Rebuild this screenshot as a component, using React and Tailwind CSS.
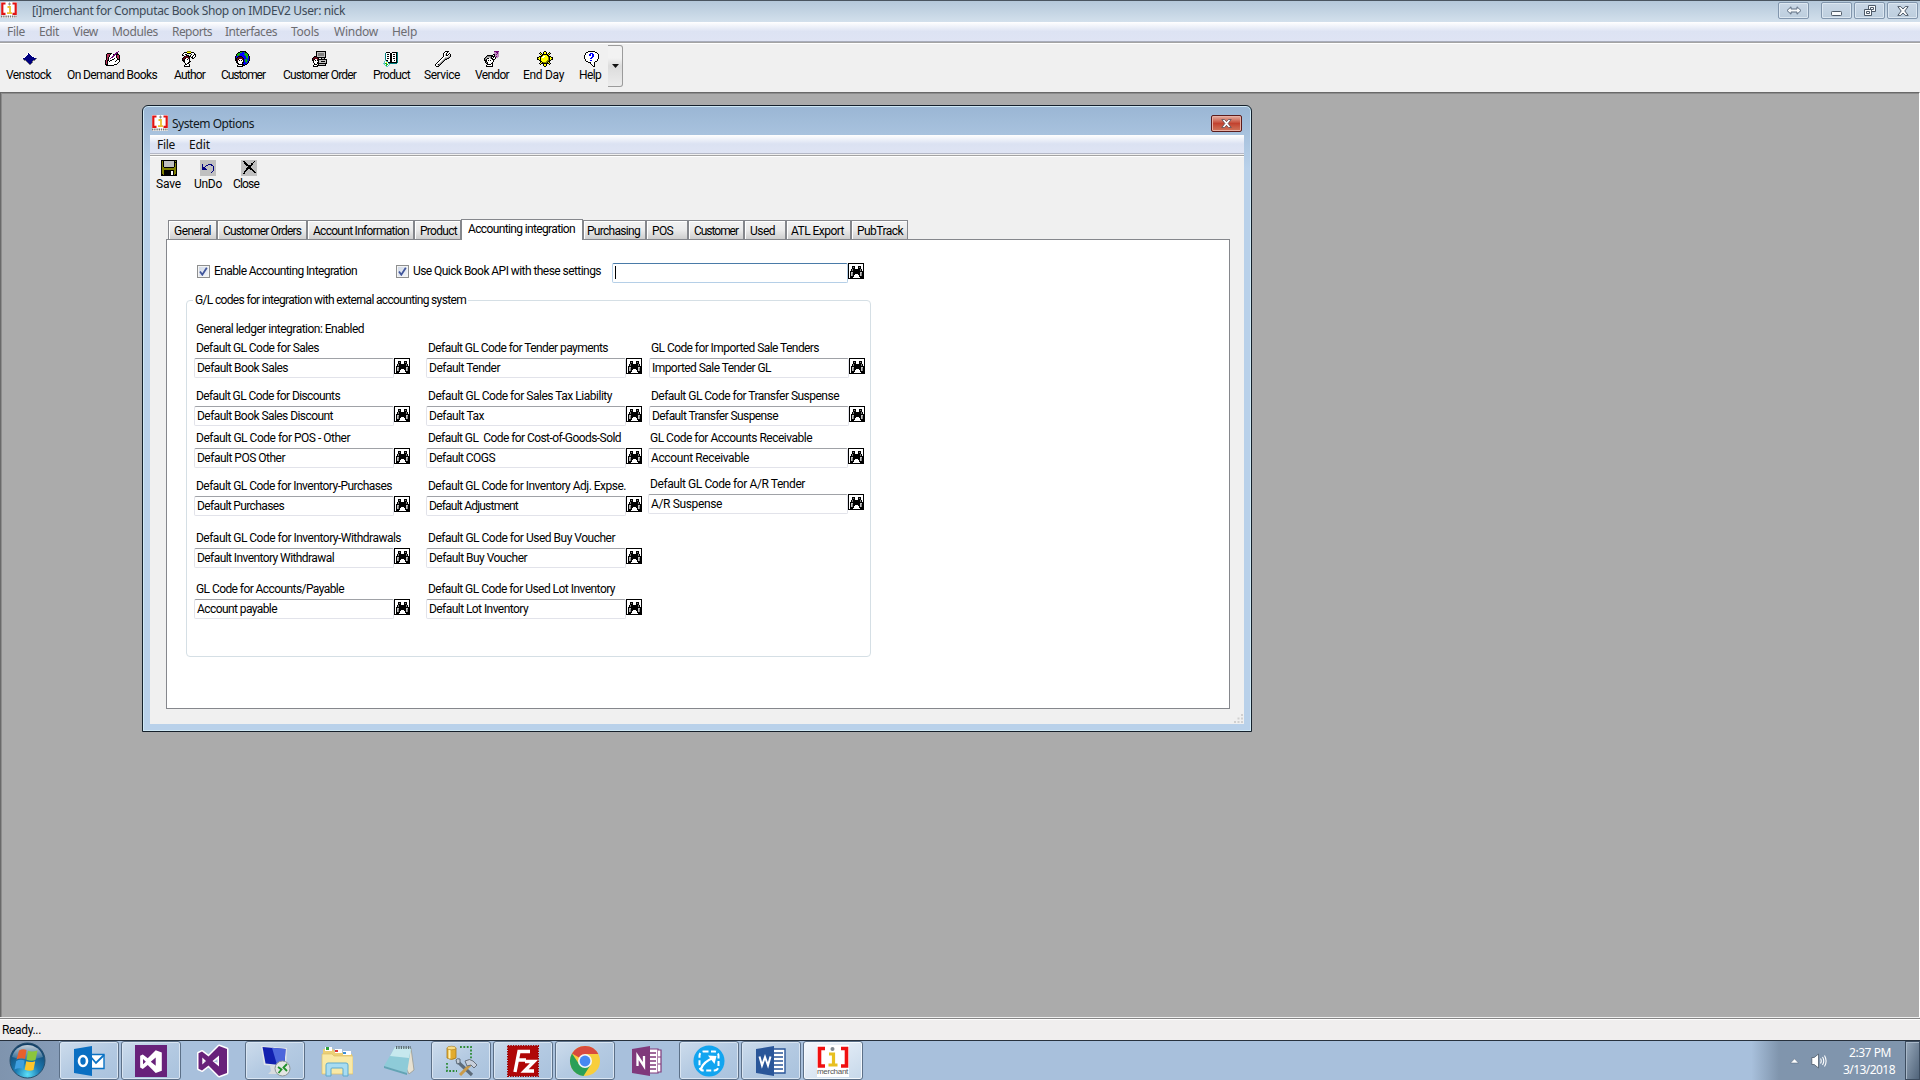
import React, { useLayoutEffect, useRef, useState } from "react";

const UI = "font-['Roboto','Liberation_Sans',sans-serif] text-[12px]";
const SEG = "font-['Noto_Sans','Open_Sans',sans-serif] text-[12px]";

// Text set to an exact width by spreading the letters.
function T({ w, children, className = "" }) {
  const ref = useRef(null);
  const [ls, setLs] = useState(0);
  useLayoutEffect(() => {
    const n = String(children).length;
    const natural = ref.current.getBoundingClientRect().width - ls * n;
    setLs((w - natural) / n);
  }, [w, children]);
  return (
    <span className={"block shrink-0 " + className} style={{ width: w }}>
      <span ref={ref} className="inline-block whitespace-pre" style={{ letterSpacing: ls }}>
        {children}
      </span>
    </span>
  );
}

const COLORS = {
  k: "#000000", w: "#ffffff", g: "#808080", l: "#c0c0c0", n: "#000080", b: "#0000ff",
  y: "#ffff00", o: "#808000", r: "#600818", m: "#b8305a", t: "#008080", c: "#60c8c8",
  p: "#c090c0", u: "#700878", e: "#10b010",
};

// Small bitmap icon: one character for each pixel.
function Pix({ rows, className = "" }) {
  const cells = [];
  rows.forEach((r, y) => {
    for (let x = 0; x < r.length; x++) {
      if (COLORS[r[x]]) cells.push(<rect key={x + "-" + y} x={x} y={y} width="1" height="1" fill={COLORS[r[x]]} />);
    }
  });
  return (
    <svg className={"block h-4 w-4 shrink-0 " + className} viewBox="0 0 16 16" shapeRendering="crispEdges">
      {cells}
    </svg>
  );
}

const BINO = [
  "kkkkkkkkkkkkkkkk",
  "kwwwwwwwwwwwwwwk",
  "kwwwwwwwwwwwwwwk",
  "kwwwkkkwwwkkkwwk",
  "kwwwkgkwwwkgkwwk",
  "kwwwkkkwwwkkkwwk",
  "kwwkgkkkkkkkgkwk",
  "kwwkgkkkkkkkgkwk",
  "kwkkkkkkkkkkkkkk",
  "kwkllkkkkkkkllkk",
  "kwklgkkkkkkklgkk",
  "kwklgkkwwwkklgkk",
  "kwklgkwwwwwklgkk",
  "kwkkkkwwwwwkkkkk",
  "kwkkkwwwwwwwkkkk",
  "kkkkkkkkkkkkkkkk",
];
const VENSTOCK = [
  "................", "......w.........", ".....wnw........", ".....wnnw.......", "....wnnnnw......",
  "...wnnnnnnw.....", ".wwnnnnnnnnnw...", "wnnnnnnnnnnnnng.", ".gnnnnnnnnnnng..", "..ggnnnnnnngg...",
  "....gnnnnng.....", ".....gnnnng.....", "......gnng......", ".......gg.......",
];
const DEMAND = [
  ".............u..", "...........uu...", "..kkkkk...uuk...", ".kmmmkwwkuukkk..", ".kmmkwwwuuwkmmk.",
  ".kmmkwwuuwwkmmk.", ".kmkwwuuwwwkmmk.", ".kmkwuwwwkwwkmk.", ".kmkwwwkkwwwkkk.", "kmkkwkkwwwwkwwk.",
  "kmkwkwwwwwkwwwk.", "kmkwwwwwwwwwwk..", "kmkwwwwwwwwwk...", "kkkwwwwwwkkk....", ".kkkkkkkk.......",
];
const AUTHOR = [
  "......oooo......", "...kkkyyyykkk...", "..kwwwkkkkwwwk..", ".kwwkk....kwwkk.", ".kk..kkk.kwwkwk.",
  "...krrrkkkwkwwk.", "..krrrrrk.kkwk..", ".krrkwwrk..kk...", ".krkwwkwk.......", ".kkkwwwwk.......",
  "..kkwwwwkk......", "...kwwwkk.......", "....kwkk........", "....kkwwk.......", "...kwwwwk.......", "...kkkkkk.......",
];
const CUSTOMER = [
  ".....kkkkkk.....", "...kkeebbekk....", "..keebbbbbeek...", ".keeebbbbeeeek..", ".keebbbbbbeeek..",
  "kbbkkkkbbbbeebk.", "kbkrrrrkbbbeebk.", "kkrrrrrrkbbbebk.", "kkrkwwwrkbeebbk.", "kkrwkwkwkbeeebk.",
  ".kkwwwwwkbeebk..", ".kkwwwwkkbbebk..", "..kkwwwkbbbbk...", "...kkkkkkbkk....", "..kwwwwkkk......", "..kkkkkk........",
];
const ORDER = [
  "....kkkkkkkkkk..", "....kllllllllk..", "....klgggggglk..", "....klgggggglk..", "....klgggggglk..",
  "..kkkllllllllk..", ".krrrkkkkkkkkk..", "krrrrrk..kllk...", "krkwwrkkkkkkkkk.", "kkwkwkklllllllk.",
  ".kwwwwkllkkkklk.", ".kwwwkklllllllk.", "..kwwkkkkkkkkkk.", "..kkk.kllllllk..", ".kwwwkkkkkkkkk..", ".kkkkk..........",
];
const PRODUCT = [
  "................", "...kkkk..kkkkkt.", "..twwwwkkwwwwkt.", "..twkkwkkwkkwkt.", "..twwwwkkwwwwkt.", "..twkkwkkwkkwkt.",
  "..twwwwkkwwwwkt.", "..twkkwkkwkkwkt.", "..twwwwkkwwwwkt.", "..ckkwwkkwwkwkt.", ".cwctwwkkwwwwkt.",
  ".cwywkkkkkkkkkt.", "cceewctttttttt..", ".cweewc.........", "..cewc..........", "...cc...........",
];
const SERVICE = [
  "..........kkkk..", ".........kwwk...", "........kwwk..k.", "........kwlk.kwk", "........kwlkkwlk",
  "........kwwwwllk", ".......kwwlllgk.", "......kwwlggkk..", ".....kwwlgkk....", "....kwwlgk......",
  "...kwwlgk.......", "..kwwlgk........", ".kwwlgk.........", "kwlkgk..........", "kwwgk...........", ".kkk............",
];
const VENDOR = [
  "..........uuuuu.", "..........ppuup.", "..........pppup.", ".........kkpupp.", "...kkkkkkwkpppp.", "..kggggkkkkpupp.",
  ".kglllgkwkwkpp..", "kglkkwlkkwwk....", "kgkwwwwwkkk.....", "kkkwkwkwwk......", ".kkwwwwwwk......",
  ".kgkwwwwk.......", "..kkwwwkk.......", "...kkkkwk.......", "..kwwwwwk.......", "..kkkkkkk.......",
];
const SUN = [
  ".......kk.......", "...k..kyyk..k...", "..kyk.kyyk.kyk..", "...kykkkkkkyk...", "....kkyyyykk....",
  "..kkkywwyyykkk..", "kkykywwyyyyokykk", "kyykyyyyyyyokyyk", "kkykyyyyyyyokykk", "..kkyyyyyyookk..",
  "...kkyyyyookk...", "...kykooookyk...", "..kykkkkkkkkyk..", "...k..kyyk..k...", "......kyyk......", ".......kk.......",
];
const HELP = [
  "....kkkkkkk.....", "..kkwwwwwwwkk...", ".kwwwwbbbwwwwk..", ".kwwwbbwbbwwwwk.", "kwwwwbbwbbwwwwk.",
  "kwwwwwwwbbwwwwk.", "kwwwwwwbbwwwwwk.", "kwwwwwbbwwwwwwk.", ".kwwwwwwwwwwwk..", ".kwwwwbbwwwwwk..",
  "..kkwwwwwwwkk...", "....kkkwwwk.....", "......kwwwk.....", ".......kwwk.....", "........kwk.....", ".........kk.....",
];
const SAVE = [
  "kkkkkkkkkkkkkkkk", "kokllllllllllkok", "kokllllllllllkkk", "kokllllllllllkok", "kokllllllllllkok", "kokllllllllllkok",
  "kokllllllllllkok", "kookkkkkkkkkkook", "kooooooooooooook", "kooooooooooooook", "kookkkkkkkkkkook",
  "kookkkkkkkwwkook", "kookkkkkkkwwkook", "kookkkkkkkwwkook", "kkokkkkkkkwwkokk", "kkkkkkkkkkkkkkkk",
];
const UNDO = [
  "llllllllllllllll", "llllllllllllllll", "llllllllllllllll", "llllllllllllllll", "llnlllllnnnnllll", "llnlllnnlllnnlll",
  "llnllnlllllllnll", "llnnnllllllllnll", "llnnnnlllllllnll", "llnnnnnllllllnll", "lllllllllllllnll",
  "llllllllllllnlll", "lllllllllllnllll", "llllllllllllllll", "llllllllllllllll", "llllllllllllllll",
];
const CLOSE = [
  "llllllllllllllll", "llkklllllllllkll", "lllkklllllllklll", "lllkkkllllkkllll", "llllkkklllkkllll", "lllllkkkkkklllll",
  "lllllllkkkllllll", "llllllkkkkllllll", "lllllkkkkkklllll", "lllllkkllkkkllll", "llllkklllllkklll",
  "lllkklllllllkkll", "lllklllllllllkkl", "llkkllllllllllll", "llllllllllllllll", "llllllllllllllll",
];

function Bracket({ className = "" }) {
  return (
    <svg className={"block shrink-0 " + className} viewBox="0 0 16 16">
      <rect width="16" height="16" fill="#fff" />
      <path d="M4.5 1.5H1.3v10.3h3.2M11.5 1.500h3.200v10.300h-3.200" fill="none" stroke="#e01414" strokeWidth="2.200" />
      <path d="M7 2h3M8.500.5v3" stroke="#888" />
      <path d="M6.500 5h2.500v6M6 11.200h5" fill="none" stroke="#ecc030" strokeWidth="1.800" />
      <path d="M0 14.500h16" stroke="#777" strokeWidth="2" strokeDasharray="1.400 0.800" />
    </svg>
  );
}

// [label, left margin, width]
const MENUS = [["File", 7, 18], ["Edit", 14, 20], ["View", 14, 25], ["Modules", 14, 46], ["Reports", 14, 40], ["Interfaces", 13, 52], ["Tools", 14, 28], ["Window", 15, 44], ["Help", 14, 25]];

// [label, text left margin, text width, icon, icon offset from the text]
const TOOLS = [
  ["Venstock", 6, 45, VENSTOCK, 16], ["On Demand Books", 16, 90, DEMAND, 38], ["Author", 17, 31, AUTHOR, 7],
  ["Customer", 16, 44, CUSTOMER, 14], ["Customer Order", 18, 73, ORDER, 29], ["Product", 17, 37, PRODUCT, 10],
  ["Service", 14, 36, SERVICE, 11], ["Vendor", 15, 34, VENDOR, 9], ["End Day", 14, 41, SUN, 14], ["Help", 15, 22, HELP, 5],
];

// [label, tab width, padding before the label, label width]
const TABS_LEFT = [["General", 49, 5, 37], ["Customer Orders", 90, 5, 78], ["Account Information", 107, 5, 96], ["Product", 47, 5, 37]];
const TABS_RIGHT = [["Purchasing", 63, 3, 53], ["POS", 42, 5, 21], ["Customer", 56, 5, 44], ["Used", 42, 5, 25], ["ATL Export", 65, 4, 53], ["PubTrack", 57, 5, 46]];

// [label, label width, value, value width, margin classes]
const COL1 = [
  ["Default GL Code for Sales", 123, "Default Book Sales", 91, "mt-0"],
  ["Default GL Code for Discounts", 144, "Default Book Sales Discount", 136, "mt-3"],
  ["Default GL Code for POS - Other", 154, "Default POS Other", 88, "mt-1.5"],
  ["Default GL Code for Inventory-Purchases", 196, "Default Purchases", 87, "mt-3"],
  ["Default GL Code for Inventory-Withdrawals", 205, "Default Inventory Withdrawal", 137, "mt-4"],
  ["GL Code for Accounts/Payable", 148, "Account payable", 80, "mt-[15px]"],
];
const COL2 = [
  ["Default GL Code for Tender payments", 180, "Default Tender", 71, "mt-0"],
  ["Default GL Code for Sales Tax Liability", 184, "Default Tax", 55, "mt-3"],
  ["Default GL  Code for Cost-of-Goods-Sold", 193, "Default COGS", 66, "mt-1.5"],
  ["Default GL Code for Inventory Adj. Expse.", 198, "Default Adjustment", 89, "mt-3"],
  ["Default GL Code for Used Buy Voucher", 187, "Default Buy Voucher", 98, "mt-4"],
  ["Default GL Code for Used Lot Inventory", 187, "Default Lot Inventory", 99, "mt-[15px]"],
];
const COL3 = [
  ["GL Code for Imported Sale Tenders", 168, "Imported Sale Tender GL", 119, "mt-0"],
  ["Default GL Code for Transfer Suspense", 188, "Default Transfer Suspense", 126, "mt-3"],
  ["GL Code for Accounts Receivable", 162, "Account Receivable", 98, "mt-1.5 -ml-px"],
  ["Default GL Code for A/R Tender", 155, "A/R Suspense", 71, "mt-2.5 -ml-px"],
];

function Field({ f }) {
  return (
    <div className={"h-9 " + f[4]}>
      <T w={f[1]} className="ml-0.5 h-[17px] leading-[14px]">{f[0]}</T>
      <div className="flex">
        <div className="h-5 w-[200px] rounded-[2px] border border-[#e2e3ea] border-t-[#a0a2a7] bg-white pl-0.5">
          <T w={f[3]} className="leading-[18px]">{f[2]}</T>
        </div>
        <Pix rows={BINO} />
      </div>
    </div>
  );
}

function Check() {
  return (
    <div className="flex h-[13px] w-[13px] shrink-0 items-center justify-center border border-[#8e8f8f] bg-gradient-to-br from-[#cfd8e6] to-[#f4f6fa] outline outline-[1px] -outline-offset-2 outline-[#f4f4f4]">
      <svg className="h-[9px] w-[9px]" viewBox="0 0 9 9">
        <path d="M1 4.500 3.300 7.700 7.800.800" fill="none" stroke="#40559b" strokeWidth="1.800" />
      </svg>
    </div>
  );
}

function TabRow({ tabs }) {
  return tabs.map((t) => (
    <div key={t[0]} className="flex h-[19px] shrink-0 border-x border-t border-[#85878c] bg-gradient-to-b from-[#f3f3f3] via-[#ebebeb] to-[#cecece] shadow-[inset_1px_1px_0_#fff]" style={{ width: t[1], paddingLeft: t[2] }}>
      <T w={t[3]} className="leading-[20px]">{t[0]}</T>
    </div>
  ));
}

function CaptionButton({ children, className = "" }) {
  return (
    <div className={"flex h-[17px] w-[31px] items-center justify-center rounded-[2px] border border-[#8296ad] bg-gradient-to-b from-[#c9d7e6] to-[#bdcede] shadow-[inset_0_0_0_1px_#dce7f1] " + className}>
      {children}
    </div>
  );
}

const VS_PATH = "M22 1 30 4V28L22 31 11.500 20.500 5 25.500 1.500 23.800V8.200L5 6.500 11.500 11.500ZM22 10.500 15.500 16 22 21.500ZM5.300 12.500V19.500L9 16Z";

const ICONS = {
  outlook: (
    <svg className="h-8 w-8" viewBox="0 0 32 32">
      <path d="M17 9.500h14v14H17z" fill="#fff" stroke="#0a72c4" strokeWidth="1.400" />
      <path d="M17 11 23 18 31 10" fill="none" stroke="#0a72c4" strokeWidth="1.800" />
      <path d="M1 4 19 1V31L1 28z" fill="#0a6fc2" />
      <ellipse cx="10" cy="16" rx="4" ry="5" fill="none" stroke="#fff" strokeWidth="2.600" />
    </svg>
  ),
  vs: (
    <svg className="h-8 w-8" viewBox="0 0 32 32">
      <rect width="32" height="32" fill="#68217a" />
      <path transform="translate(4 4.500) scale(.76)" d={VS_PATH} fill="#fff" fillRule="evenodd" />
    </svg>
  ),
  vs2: (
    <svg className="h-8 w-8 overflow-visible" viewBox="0 0 32 32">
      <path d={VS_PATH} fill="#68217a" stroke="#fff" strokeWidth="3" strokeLinejoin="round" />
      <path d={VS_PATH} fill="#68217a" fillRule="evenodd" />
    </svg>
  ),
  rdp: (
    <svg className="h-8 w-8" viewBox="0 0 32 32">
      <path d="M2 1 28 3 27 22 5 20z" fill="#dfe4ea" />
      <path d="M3.500 2 26.500 4 25.500 20.500 6.500 18.500z" fill="#1220b0" />
      <path d="M13 2.800 26.500 4 25.500 20.500 18 19.700z" fill="#4c66dc" />
      <path d="M11 21h7l1 5 4 3H9l3-3z" fill="#d8dce0" />
      <circle cx="23.500" cy="23.500" r="7.500" fill="#e3e6e3" stroke="#8d9597" />
      <path d="m19 22 3.500 2.500-3 3.500M28 19 24.500 22.500 28 26" fill="none" stroke="#20902a" strokeWidth="1.800" />
    </svg>
  ),
  folder: (
    <svg className="h-8 w-8" viewBox="0 0 32 32">
      <path d="M2 4h10l2 3h7l2 2h8v20H2z" fill="#eccf75" />
      <path d="M4 2h7v4H4z" fill="#fff" /><path d="M5 2h3v3H5z" fill="#2fa13a" />
      <path d="M14 4h7v4h-7z" fill="#fff" /><path d="M14 5h3v2h-3z" fill="#d33" />
      <path d="M22 6h8v4h-8z" fill="#fff" /><path d="M22 7h3v2h-3z" fill="#3a8fd8" />
      <path d="M1 9h10l2 2h19v18H1z" fill="#f9e9a6" stroke="#dcbf68" strokeWidth=".7" />
      <path d="M5 31V20q0-2 2-2h18q2 0 2 2v11h-5v-7q0-1-1-1H11q-1 0-1 1v7z" fill="#a8dcf2" stroke="#5ea9cd" />
    </svg>
  ),
  notepad: (
    <svg className="h-8 w-8" viewBox="0 0 32 32">
      <path d="M13 2 28 3 31 25 26 29z" fill="#e8e2d2" stroke="#9b9b90" strokeWidth=".8" />
      <path d="M12 2 28 3 24 28 1 21z" fill="#8ecbd8" />
      <path d="M12 2 28 3 26 13 7 11z" fill="#c6e8ee" />
      <path d="M1 21 24 28v2L1 23z" fill="#62a4b4" />
      <path d="M13 2.500H28" stroke="#5a6a72" strokeWidth="3" strokeDasharray="1.200 1.200" />
    </svg>
  ),
  sql: (
    <svg className="h-8 w-8" viewBox="0 0 32 32">
      <path d="M15 2h11v12" fill="none" stroke="#2c8a34" strokeWidth="1.800" strokeDasharray="1.800 1.600" />
      <path d="M2 18v8h10" fill="none" stroke="#2c8a34" strokeWidth="1.800" strokeDasharray="1.800 1.600" />
      <path d="M2 3v10q4.500 3 9 0V3z" fill="#e2ab2e" stroke="#a47a1c" strokeWidth=".8" />
      <path d="M4.500 4v9.500" stroke="#fff0b0" strokeWidth="2" />
      <ellipse cx="6.500" cy="3" rx="4.500" ry="1.800" fill="#f8dc86" stroke="#a47a1c" strokeWidth=".6" />
      <path d="M13 17 27 30" stroke="#5d6c7a" strokeWidth="3.200" />
      <path d="M11 15q1-2 4-1v4l-3 1z" fill="#c5ced8" stroke="#5d6c7a" />
      <path d="M26 19 15 30" stroke="#c99b4a" strokeWidth="3" />
      <path d="M20 16q5-3 8 0l4 4-3 3-3-3-4 1z" fill="#c8d0dc" stroke="#66707c" />
    </svg>
  ),
  fz: (
    <svg className="h-8 w-8" viewBox="0 0 32 32">
      <rect x="1" y="1" width="30" height="30" fill="#b00808" />
      <rect x=".8" y=".8" width="30.400" height="30.400" fill="none" stroke="#a00404" strokeWidth="1.600" strokeDasharray="1.500 1" />
      <path d="M8 27 12 6.500H23M10.500 15H19M18 16.500H27L17.500 26H27" fill="none" stroke="#fff" strokeWidth="3.400" />
    </svg>
  ),
  chrome: (
    <svg className="h-8 w-8" viewBox="0 0 32 32">
      <circle cx="16" cy="16" r="15" fill="#f8ce3c" />
      <path d="M16 16 3 8.500A15 15 0 0 1 29.300 9H16z" fill="#d94a3d" />
      <path d="M3 8.500A15 15 0 0 0 14.500 31L21.500 20 10 19z" fill="#2a9f57" />
      <circle cx="16" cy="16" r="7" fill="#f5f5f5" />
      <circle cx="16" cy="16" r="5.400" fill="#4688f1" />
    </svg>
  ),
  onenote: (
    <svg className="h-8 w-8" viewBox="0 0 32 32">
      <path d="M17 4h10v24H17z" fill="#fff" stroke="#80397b" strokeWidth="1.200" />
      <path d="M27 5h3v22h-3M27 12h3M27 19h3" fill="#fff" stroke="#80397b" strokeWidth="1.200" />
      <path d="M19 8h6M19 12h6M19 16h6M19 20h6M19 24h6" stroke="#80397b" strokeWidth="1.400" />
      <path d="M1 4 19 1V31L1 28z" fill="#80397b" />
      <path d="M6.500 21V11L13 21V11" fill="none" stroke="#fff" strokeWidth="2.300" />
    </svg>
  ),
  snip: (
    <svg className="h-8 w-8" viewBox="0 0 32 32">
      <circle cx="16" cy="16" r="15.500" fill="#12a5f0" />
      <rect x="6.500" y="6.500" width="19" height="19" rx="4" fill="none" stroke="#fff" strokeWidth="2" strokeDasharray="5 2.500" />
      <path d="M8 24Q10 17 20 13" fill="none" stroke="#fff" strokeWidth="2.400" />
      <path d="m15 10.500 8.500.500-2 8z" fill="#fff" />
    </svg>
  ),
  word: (
    <svg className="h-8 w-8" viewBox="0 0 32 32">
      <path d="M17 4h13v24H17z" fill="#fff" stroke="#2a5699" strokeWidth="1.400" />
      <path d="M19 8h9M19 12h9M19 16h9M19 20h9M19 24h9" stroke="#2a5699" strokeWidth="1.600" />
      <path d="M1 4 19 1V31L1 28z" fill="#2a5699" />
      <path d="M4.500 11.500 7 20.500 10 12 13 20.500 15.500 11.500" fill="none" stroke="#fff" strokeWidth="2" />
    </svg>
  ),
  merchant: (
    <div className="flex h-8 w-8 flex-col bg-white">
      <svg className="h-[23px] w-8" viewBox="0 0 32 23">
        <path d="M8 3.500H2.500v17.500H8M24 3.500H29.500v17.500H24" fill="none" stroke="#f01010" strokeWidth="3.600" />
        <circle cx="15.500" cy="4" r="2" fill="#808890" />
        <path d="M12 9h4.500v11M11.500 20h9" fill="none" stroke="#e8c020" strokeWidth="3.200" />
      </svg>
      <T w={31} className="font-['Liberation_Sans',sans-serif] text-[8px] leading-[8px] text-[#555]">merchant</T>
    </div>
  ),
};

const TASKS = [
  ["outlook", "open"], ["vs", "open"], ["vs2", ""], ["rdp", "open"], ["folder", ""], ["notepad", ""], ["sql", "open"],
  ["fz", "open"], ["chrome", "open"], ["onenote", ""], ["snip", "open"], ["word", "open"], ["merchant", "active"],
];
const TASK_STYLE = {
  open: "border-[#5c7088] bg-gradient-to-br from-[#cddcec] via-[#b4cae2] to-[#a9c2dd] shadow-[inset_0_0_0_1px_#d9e5f2]",
  active: "border-[#5c7088] bg-gradient-to-br from-[#f4f8fc] via-[#dce7f3] to-[#c6d8ea] shadow-[inset_0_0_0_1px_#f4f8fc]",
  "": "border-transparent",
};

export default function App() {
  return (
    <div className={"flex h-[1080px] w-[1920px] flex-col overflow-hidden bg-[#f0f0f0] text-black " + UI}>
      {/* Main caption */}
      <div className="flex h-[22px] shrink-0 border-t border-[#4a5560] bg-gradient-to-b from-[#b4c8da] to-[#d3e0ec] pr-0.5">
        <Bracket className="ml-px mt-px h-4 w-4" />
        <T w={313} className={"ml-[15px] leading-[20px] text-[#3d4a57] " + SEG}>[i]merchant for Computac Book Shop on IMDEV2 User: nick</T>
        <div className="ml-auto flex pt-px">
          <CaptionButton className="mr-3">
            <svg className="h-[9px] w-4" viewBox="0 0 16 9"><path d="M1 4.500 5 .8V3h6V.8l4 3.700-4 3.700V6H5v2.200z" fill="#f6f8fa" stroke="#5c6c80" /></svg>
          </CaptionButton>
          <CaptionButton className="mr-0.5">
            <svg className="mt-[5px] h-[5px] w-[11px]" viewBox="0 0 11 5"><rect x=".5" y=".5" width="10" height="4" rx=".8" fill="#f8fafc" stroke="#4e5a68" /></svg>
          </CaptionButton>
          <CaptionButton className="mr-0.5">
            <svg className="h-[11px] w-3" viewBox="0 0 12 11" fill="#f8fafc" stroke="#4e5a68"><path d="M4.500.5h7v6h-7z" /><path d="M6.500 2.500h3v2h-3z" /><path d="M.5 4.500h7v6h-7z" /><path d="M2.500 6.500h3v2h-3z" /></svg>
          </CaptionButton>
          <CaptionButton>
            <svg className="h-[10px] w-3" viewBox="0 0 12 10"><path d="M.8.600h3L6 3 8.200.600h3L7.800 5l3.400 4.400h-3L6 7 3.800 9.400h-3L4.200 5z" fill="#fbfcfd" stroke="#4e5a68" /></svg>
          </CaptionButton>
        </div>
      </div>

      {/* Main menu */}
      <div className={"flex h-[20px] shrink-0 border-b border-[#a9adbb] bg-gradient-to-b from-white via-[#dde3f3] to-[#dfe4f4] leading-[19px] text-[#6d6d72] " + SEG}>
        {MENUS.map((m) => (
          <div key={m[0]} style={{ marginLeft: m[1] }}><T w={m[2]}>{m[0]}</T></div>
        ))}
      </div>

      {/* Main toolbar */}
      <div className="flex h-[50px] shrink-0 border-t border-[#a3a3a3] bg-[#f0f0f0] shadow-[inset_0_1px_0_#fff]">
        {TOOLS.map((t, i) => (
          <div key={i} className="pt-2" style={{ marginLeft: t[1] }}>
            <div style={{ paddingLeft: t[4] }} className="-mr-4"><Pix rows={t[3]} /></div>
            <T w={t[2]} className="leading-[17px]">{t[0]}</T>
          </div>
        ))}
        <div className="ml-[7px] mt-0.5 flex h-[42px] w-[15px] items-center justify-center rounded-r-[3px] border border-l-0 border-[#9b9b9b] bg-gradient-to-b from-[#f2f2f2] from-30% via-[#dcdcdc] via-50% to-[#ececec]">
          <svg className="h-1 w-[7px]" viewBox="0 0 7 4"><path d="M0 0h7L3.500 4z" fill="#111" /></svg>
        </div>
      </div>

      {/* Workspace */}
      <div className="h-[925px] shrink-0 border-l border-r border-t border-[#696969] border-r-white bg-[#ababab] shadow-[inset_1px_1px_0_#8c8c8c]">
        <div className="ml-[141px] mt-[12px] flex h-[627px] w-[1110px] flex-col rounded-t-[6px] border border-[#15202b] bg-gradient-to-b from-[#9ab6d4] via-[#b9d1ea] via-10% to-[#b9d1ea] px-[7px] pb-[7px] shadow-[inset_0_0_0_1px_#cfe8f5,inset_-1px_-1px_0_0_#5cc4d0]">
          <div className="flex h-[29px] shrink-0">
            <Bracket className="ml-[2px] mt-[9px] h-4 w-4" />
            <T w={82} className={"ml-[4px] mt-[9px] leading-[18px] text-[#101820] " + SEG}>System Options</T>
            <div className="ml-auto mr-[2px] mt-[9px] flex h-[17px] w-[31px] items-center justify-center rounded-[2px] border border-[#5b1c1c] bg-gradient-to-b from-[#dd9a8c] from-10% via-[#c2422f] via-50% to-[#d0765c] shadow-[inset_0_0_0_1px_#e8b0a4]">
              <svg className="h-[9px] w-[11px]" viewBox="0 0 12 10"><path d="M.8.600h3L6 3 8.200.600h3L7.800 5l3.400 4.400h-3L6 7 3.800 9.400h-3L4.200 5z" fill="#fff" stroke="#5a4a50" strokeWidth=".9" /></svg>
            </div>
          </div>
          <div className="flex min-h-0 flex-1 flex-col bg-[#f0f0f0]">
            <div className={"flex h-[19px] shrink-0 border-b border-[#b4b8c6] bg-gradient-to-b from-white via-[#dbe2f2] to-[#dfe4f4] leading-[19px] text-[#101010] " + SEG}>
              <T w={18} className="ml-[7px]">File</T>
              <T w={21} className="ml-[14px]">Edit</T>
            </div>
            <div className="mt-px flex h-[64px] shrink-0 border-t border-[#a3a3a3] pt-1 shadow-[inset_0_1px_0_#fff]">
              <div className="ml-[6px]"><Pix rows={SAVE} className="ml-[5px]" /><T w={25} className="leading-[17px]">Save</T></div>
              <div className="ml-[13px]"><Pix rows={UNDO} className="ml-[6px]" /><T w={28} className="leading-[17px]">UnDo</T></div>
              <div className="ml-[11px]"><Pix rows={CLOSE} className="ml-[8px]" /><T w={26} className="leading-[17px]">Close</T></div>
            </div>
            {/* Tabs */}
            <div className="relative z-10 ml-[18px] flex h-[21px] shrink-0 items-end">
              <div className="flex pb-px"><TabRow tabs={TABS_LEFT} /></div>
              <div className="flex h-[21px] w-[122px] shrink-0 border-x border-t border-[#85878c] bg-white pl-[6px]">
                <T w={107} className="leading-[18px]">Accounting integration</T>
              </div>
              <div className="flex pb-px"><TabRow tabs={TABS_RIGHT} /></div>
            </div>
            {/* Tab page */}
            <div className="-mt-px ml-[16px] h-[470px] w-[1064px] shrink-0 border border-[#85878c] bg-white">
              <div className="flex h-[45px] pt-[23px]">
                <div className="ml-[30px] mt-[2px]"><Check /></div>
                <T w={143} className="ml-[4px] leading-[17px]">Enable Accounting Integration</T>
                <div className="ml-[39px] mt-[2px]"><Check /></div>
                <T w={188} className="ml-[4px] leading-[17px]">Use Quick Book API with these settings</T>
                <div className="ml-[11px] h-5 w-[236px] shrink-0 rounded-[2px] border border-[#b5cfe7] border-t-[#4a7ba8] pl-[2px] pt-[2px]">
                  <div className="h-[13px] w-px bg-black" />
                </div>
                <Pix rows={BINO} />
              </div>
              <fieldset className="ml-[19px] mt-[8px] h-[364px] w-[685px] rounded-[4px] border border-[#d5dfe5]">
                <legend className="ml-[6px] h-[15px] px-[2px]"><T w={271} className="leading-[15px]">G/L codes for integration with external accounting system</T></legend>
                <T w={168} className="ml-[9px] mt-[14px] h-[19px] leading-[15px]">General ledger integration: Enabled</T>
                <div className="ml-[7px] flex">
                  <div className="w-[232px]">{COL1.map((f) => <Field key={f[0]} f={f} />)}</div>
                  <div className="w-[223px]">{COL2.map((f) => <Field key={f[0]} f={f} />)}</div>
                  <div>{COL3.map((f) => <Field key={f[0]} f={f} />)}</div>
                </div>
              </fieldset>
            </div>
            <div className="mt-auto flex justify-end pb-px pr-px">
              <svg className="h-[9px] w-[9px]" viewBox="0 0 9 9"><path d="M7 0h2v2H7zM7 3.500h2v2H7zM3.500 3.500h2v2h-2zM7 7h2v2H7zM3.500 7h2v2h-2zM0 7h2v2H0z" fill="#d0d0d0" /></svg>
            </div>
          </div>
        </div>
      </div>

      {/* Status bar */}
      <div className="mt-px h-[22px] shrink-0 border-t border-[#858585] bg-[#f0eeee] shadow-[inset_0_1px_0_#fff]">
        <T w={39} className="ml-[2px] leading-[22px]">Ready...</T>
      </div>

      {/* Taskbar */}
      <div className="flex h-10 shrink-0 border-t border-[#27313d] bg-[#a8c0dc]">
        <div className="flex w-[59px] shrink-0 justify-center bg-gradient-to-r from-[#7f94ae] to-[#869cb8] pr-[5px] pt-px">
          <svg className="h-[37px] w-[37px]" viewBox="0 0 37 37">
            <defs>
              <radialGradient id="orb" cx="50%" cy="90%" r="85%"><stop offset="0" stopColor="#5ce0f8" /><stop offset=".4" stopColor="#1b7cb4" /><stop offset="1" stopColor="#123e66" /></radialGradient>
              <linearGradient id="gl" x1="0" y1="0" x2="0" y2="1"><stop offset="0" stopColor="#fff" stopOpacity=".75" /><stop offset="1" stopColor="#fff" stopOpacity=".1" /></linearGradient>
            </defs>
            <circle cx="18.500" cy="18.500" r="17.500" fill="url(#orb)" stroke="#28506e" />
            <path d="M3 15A16 16 0 0 1 34 15Q18 20 3 15z" fill="url(#gl)" />
            <path d="M10 8.500q4-2 7.500-.5L16 17q-4-1.500-8.500.5z" fill="#e8602c" />
            <path d="M19 8.800q4 1.600 9.500-.3L26.500 18q-4 1.500-9-.3z" fill="#8cc63c" />
            <path d="M7.200 19q4-2 8.400-.5L14 27q-4-1.500-8.500.5z" fill="#3f9fe0" />
            <path d="M17.200 19.300q4 1.600 9-.1L24.500 28q-4 1.500-8.800-.3z" fill="#fcc52c" />
          </svg>
        </div>
        <div className="flex gap-[2px]">
          {TASKS.map((t) => (
            <div key={t[0]} className={"flex h-[39px] w-[60px] items-center justify-center rounded-[3px] border " + TASK_STYLE[t[1]]}>{ICONS[t[0]]}</div>
          ))}
        </div>
        <div className="ml-auto flex w-[172px] bg-gradient-to-r from-[#a8c0dc] from-[2%] to-[#8095ad] to-[18%] text-white">
          <svg className="ml-[42px] mt-[17px] h-[6px] w-[9px]" viewBox="0 0 9 6"><path d="M.5 5 4.500.8 8.500 5z" fill="#fff" stroke="#526478" strokeWidth=".5" /></svg>
          <svg className="ml-[12px] mt-[12px] h-4 w-4" viewBox="0 0 16 16">
            <path d="M.8 4.500h2.400L7.500 1v14L3.200 11.500H.8z" fill="#fff" stroke="#4c5a6a" strokeWidth=".8" />
            <path d="M9.500 5.500q1.500 2.500 0 5M11.500 4q2.500 4 0 8M13.500 2.500q3.200 5.500 0 11" fill="none" stroke="#fff" strokeWidth="1.100" />
          </svg>
          <div className={"ml-[16px] pt-[3px] " + SEG}>
            <T w={42} className="ml-[6px] leading-[17px]">2:37 PM</T>
            <T w={52} className="leading-[17px]">3/13/2018</T>
          </div>
          <div className="ml-auto h-[39px] w-[15px] border border-[#3d4d60] bg-gradient-to-br from-[#98a9bb] to-[#51647a] shadow-[inset_1px_1px_0_#a9b8c8]" />
        </div>
      </div>
    </div>
  );
}
